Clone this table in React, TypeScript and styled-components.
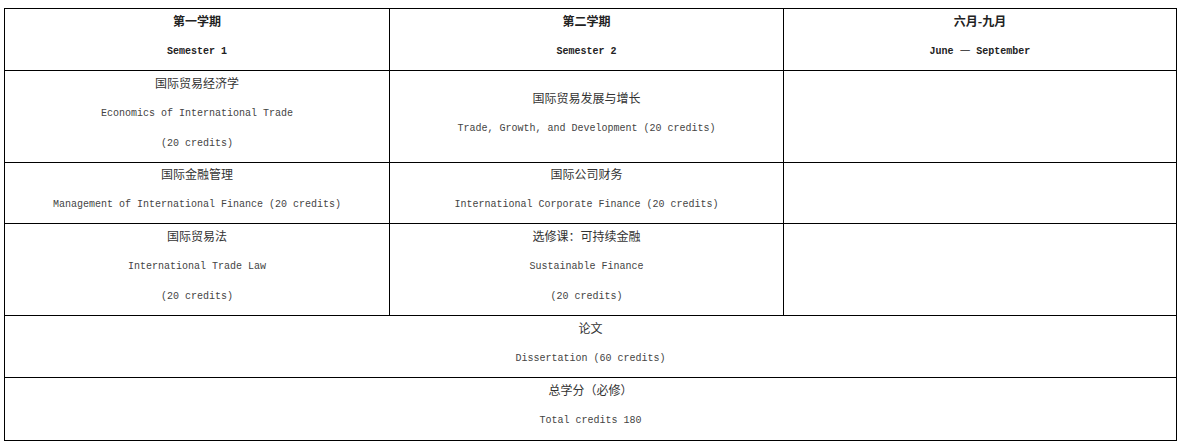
import React from "react";
import styled, { createGlobalStyle } from "styled-components";

const GlobalStyle = createGlobalStyle`
  html, body { margin: 0; padding: 0; background: #fff; }
  body { font-family: "Noto Sans CJK SC", sans-serif; color: #333; }
`;

const Page = styled.div`
  padding: 8px 4px 0 4px;
`;

const Grid = styled.div`
  display: grid;
  width: 1173px;
  box-sizing: border-box;
  grid-template-columns: 384px 393px 392px;
  grid-template-rows: 61px 91px 60px 91px 61px 62px;
  gap: 1px;
  padding: 1px;
  background: #000;
`;

const Cell = styled.div<{ $span?: number }>`
  background: #fff;
  grid-column: ${(p) => (p.$span ? `span ${p.$span}` : "auto")};
  display: flex;
  flex-direction: column;
  align-items: center;
  justify-content: center;
  gap: 6px;
  padding-bottom: 8px;
  box-sizing: border-box;
  text-align: center;
`;

const Zh = styled.div<{ $bold?: boolean }>`
  font-family: "Noto Sans CJK SC", sans-serif;
  font-size: 12px;
  line-height: 24px;
  height: 24px;
  font-weight: ${(p) => (p.$bold ? 700 : 400)};
  color: ${(p) => (p.$bold ? "#222" : "#333")};
  white-space: nowrap;
`;

const En = styled.div<{ $bold?: boolean }>`
  font-family: "Liberation Mono", "Noto Sans CJK SC", monospace;
  font-size: 10px;
  line-height: 24px;
  height: 24px;
  padding-top: 1px;
  box-sizing: border-box;
  font-weight: ${(p) => (p.$bold ? 700 : 400)};
  color: ${(p) => (p.$bold ? "#222" : "#444")};
  white-space: nowrap;
`;

const WideDash = styled.span`
  font-family: "Noto Sans CJK SC", sans-serif;
  font-size: 12px;
  font-weight: 400;
  line-height: 0;
`;

type CellData = { zh?: string; en?: React.ReactNode[]; span?: number; head?: boolean };

const cells: CellData[] = [
  { zh: "第一学期", en: ["Semester 1"], head: true },
  { zh: "第二学期", en: ["Semester 2"], head: true },
  {
    zh: "六月-九月",
    en: [
      <>
        June <WideDash>—</WideDash> September
      </>,
    ],
    head: true,
  },
  { zh: "国际贸易经济学", en: ["Economics of International Trade", "(20 credits)"] },
  { zh: "国际贸易发展与增长", en: ["Trade, Growth, and Development (20 credits)"] },
  {},
  { zh: "国际金融管理", en: ["Management of International Finance (20 credits)"] },
  { zh: "国际公司财务", en: ["International Corporate Finance (20 credits)"] },
  {},
  { zh: "国际贸易法", en: ["International Trade Law", "(20 credits)"] },
  { zh: "选修课：可持续金融", en: ["Sustainable Finance", "(20 credits)"] },
  {},
  { zh: "论文", en: ["Dissertation (60 credits)"], span: 3 },
  { zh: "总学分（必修）", en: ["Total credits 180"], span: 3 },
];

export default function App() {
  return (
    <>
      <GlobalStyle />
      <Page>
        <Grid>
          {cells.map((c, i) => (
            <Cell key={i} $span={c.span}>
              {c.zh && <Zh $bold={c.head}>{c.zh}</Zh>}
              {c.en?.map((t, j) => (
                <En key={j} $bold={c.head}>
                  {t}
                </En>
              ))}
            </Cell>
          ))}
        </Grid>
      </Page>
    </>
  );
}
